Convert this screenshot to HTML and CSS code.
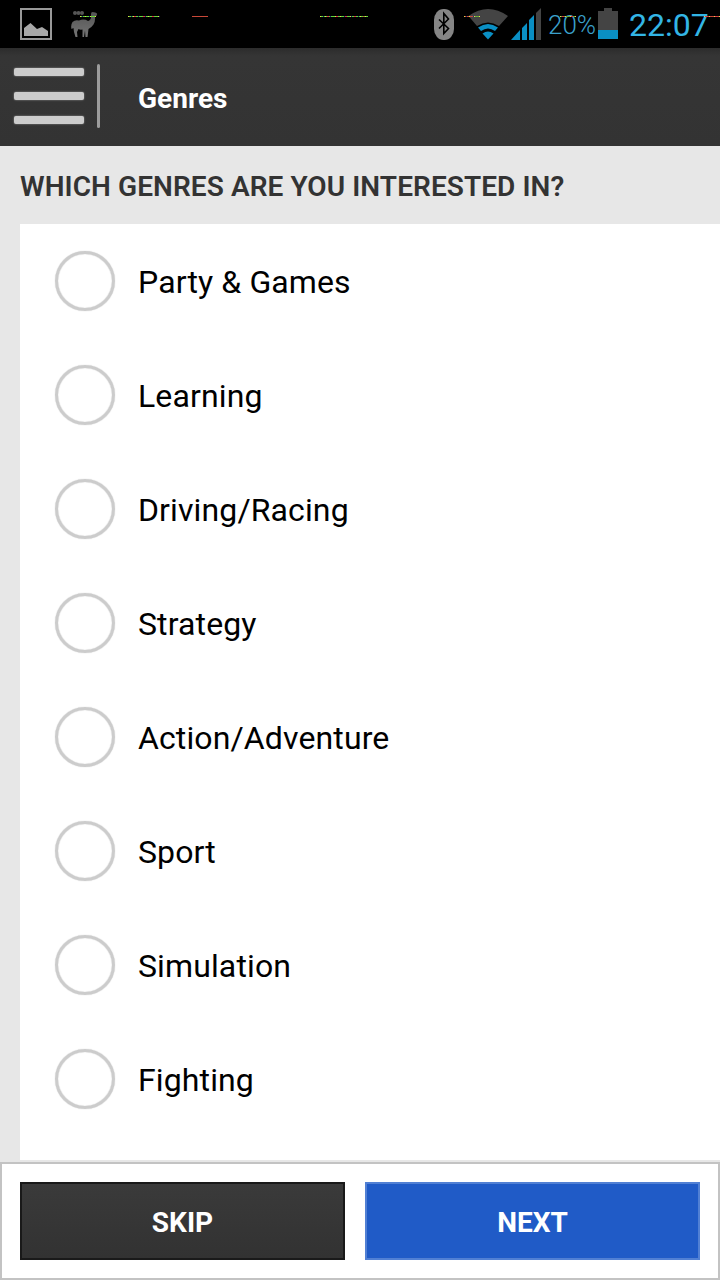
FILE: index.html
```html
<!DOCTYPE html>
<html lang="en">

<head>
    <meta charset="UTF-8">
    <meta name="viewport" content="width=device-width, initial-scale=1.0">
    <title>Genres</title>
    <link rel="stylesheet" href="styles.css">
</head>

<body>
    <div class="status-bar">
        <svg class="picture-icon" width="32" height="32" viewBox="0 0 32 32">
            <rect x="1" y="1" width="30" height="30" fill="none" stroke="#999" stroke-width="2" />
            <path d="M4 28V20L10.500 15L17 21L22 19L28 23V28Z" fill="#a8a8a8" />
        </svg>
        <svg class="llama-icon" width="28" height="28" viewBox="0 0 28 28">
            <defs>
                <linearGradient id="fur" x1="0" y1="0" x2="0" y2="1">
                    <stop offset="0" stop-color="#555" />
                    <stop offset="1" stop-color="#747474" />
                </linearGradient>
            </defs>
            <path d="M20 3Q20 1 21.500 1Q25 1 26 2.500Q26.500 5 24 6Q24.500 10 22.500 13.500Q20.500 16.500 17.500 18L16.500 26H14.500L14 19.500L13 26H11.500V18.500Q9 19 7.500 18L6 21L6.500 26H4.500L3 21L2.500 17L0.500 18Q-0.500 14 1.500 11Q4 8.500 8 9.500Q13 7.500 17 10Q20 9 20 6Z" fill="url(#fur)" />
            <g fill="#555">
                <circle cx="4" cy="2" r="2" />
                <circle cx="7.500" cy="2" r="2" />
                <circle cx="11" cy="2" r="2" />
            </g>
        </svg>
        <div class="status-right">
            <svg width="20" height="31" viewBox="0 0 20 31">
                <rect width="20" height="31" rx="9.500" ry="11" fill="#858585" />
                <path d="M5 10.500L14.500 19.500L9.800 24.500V4.500L14.500 10L5 19.500" fill="none" stroke="#000" stroke-width="1.600" />
            </svg>
            <svg class="wifi-icon" width="40" height="31" viewBox="0 0 40 31">
                <path d="M0.500 7Q20 -7 40 7L31 17Q20 10 9 17Z" fill="#444" />
                <path d="M10 18.500Q20 11.500 30 18.500L27 22Q20 17 13 22Z" fill="#0a8fc4" />
                <path d="M14.500 24.500Q20 20.500 25.500 24.500L20 30.500Z" fill="#0a8fc4" />
            </svg>
            <svg class="signal-icon" width="30" height="32" viewBox="0 0 30 32">
                <path d="M0 32L9 22V32ZM11 20L16 15V32H11ZM18 12L23 7V32H18Z" fill="#0a8fc4" />
                <path d="M25 5L30 0V32H25Z" fill="#444" />
            </svg>
            <span class="percent">20%</span>
            <svg class="battery-icon" width="20" height="31" viewBox="0 0 20 31">
                <path d="M0 3H6V0H14V3H20V22H0Z" fill="#444" />
                <rect y="22" width="20" height="9" fill="#0a8fc4" />
            </svg>
            <span class="clock">22:07</span>
        </div>
        <!-- coloured specks across the bar -->
        <svg class="specks" width="720" height="1" viewBox="0 0 720 1">
            <path d="M80 .5H96M128 .5H160M320 .5H368" stroke="#5fd83a" />
            <path d="M192 .5H208M464 .5H474M704 .5H720" stroke="#c84838" />
            <path d="M474 .5H480M560 .5H576" stroke="#64a83c" />
            <path d="M80 .5H96M128 .5H160M320 .5H367M464 .5H480M560 .5H576M704 .5H720" stroke="#e6d84a" stroke-dasharray="1 4" />
            <path d="M82 .5H94M131 .5H160M323 .5H364M466 .5H480" stroke="#203070" stroke-dasharray="1 6" />
            <path d="M134 .5H160M327 .5H364M562 .5H576M706 .5H720" stroke="#e0304c" stroke-dasharray="2 7" />
        </svg>
    </div>

    <header class="app-bar">
        <div class="menu">
            <span></span>
            <span></span>
            <span></span>
        </div>
        <div class="divider"></div>
        <h1>Genres</h1>
    </header>

    <main>
        <h2>WHICH GENRES ARE YOU INTERESTED IN?</h2>
        <ul class="genres">
            <li><span class="radio"></span><span class="name">Party &amp; Games</span></li>
            <li><span class="radio"></span><span class="name">Learning</span></li>
            <li><span class="radio"></span><span class="name">Driving/Racing</span></li>
            <li><span class="radio"></span><span class="name">Strategy</span></li>
            <li><span class="radio"></span><span class="name">Action/Adventure</span></li>
            <li><span class="radio"></span><span class="name">Sport</span></li>
            <li><span class="radio"></span><span class="name">Simulation</span></li>
            <li><span class="radio"></span><span class="name">Fighting</span></li>
        </ul>
    </main>

    <footer>
        <button class="skip">SKIP</button>
        <button class="next">NEXT</button>
    </footer>
</body>

</html>
```

FILE: styles.css
```css
* {
    box-sizing: border-box;
}

body {
    display: flex;
    flex-direction: column;
    width: 720px;
    height: 1280px;
    margin: 0;
    overflow: hidden;
    background: #e7e7e7;
    font-family: Roboto, sans-serif;
}

.status-bar {
    position: relative;
    display: flex;
    align-items: flex-start;
    height: 48px;
    padding: 8px 12px 0 20px;
    background: #000;
}

.llama-icon {
    margin: 3px 0 0 19px;
}

.status-right {
    display: flex;
    align-items: flex-start;
    margin-left: auto;
    padding-top: 1px;
}

.wifi-icon {
    margin-left: 14px;
}

.signal-icon {
    margin: -1px 0 0 3px;
}

.percent {
    width: 50px;
    margin: 0 0 0 7px;
    font-size: 26px;
    font-weight: 300;
    line-height: 32px;
    color: #3ba0cc;
}

.battery-icon {
    margin-top: -1px;
}

.clock {
    width: 79px;
    margin-left: 11px;
    font-size: 32px;
    line-height: 32px;
    white-space: nowrap;
    color: #33b5e5;
}

.specks {
    position: absolute;
    top: 16px;
    left: 0;
}

.app-bar {
    display: flex;
    align-items: center;
    height: 98px;
    padding-left: 14px;
    background: linear-gradient(#2c2c2c, #353535 8px, #333);
    color: #fff;
}

.menu {
    display: flex;
    flex-direction: column;
    gap: 16px;
    width: 70px;
    margin-bottom: 2px;
}

.menu span {
    height: 8px;
    border-radius: 2px;
    background: #ccc;
    box-shadow: 0 0 2px #999;
}

.divider {
    width: 3px;
    height: 64px;
    margin: 0 38px 2px 13px;
    border-radius: 2px;
    background: #9c9c9c;
}

h1 {
    margin: 2px 0 0;
    font-size: 28px;
    font-weight: 700;
}

main {
    display: flex;
    flex-direction: column;
    height: 1016px;
    padding: 0 0 2px 20px;
}

h2 {
    margin: 0;
    font-size: 28px;
    font-weight: 600;
    line-height: 82px;
    height: 78px;
    letter-spacing: 0.08px;
    color: #333;
    white-space: nowrap;
}

.genres {
    flex: 1;
    margin: 0;
    padding: 0;
    list-style: none;
    background: #fff;
}

.genres li {
    display: flex;
    align-items: center;
    height: 114px;
    padding-left: 35px;
}

.radio {
    width: 60px;
    height: 60px;
    margin-right: 23px;
    border: 3px solid #ccc;
    border-radius: 50%;
    box-shadow: 0 0 1px #bbb, inset 0 0 1px #bbb;
}

.name {
    padding-top: 2px;
    font-size: 32px;
    letter-spacing: 0.12px;
    color: #000;
}

footer {
    display: flex;
    gap: 20px;
    height: 118px;
    padding: 18px;
    border: 2px solid #c3c3c3;
    background: #fff;
}

button {
    height: 78px;
    padding: 2px 0 0;
    font-family: Roboto, sans-serif;
    font-size: 28px;
    font-weight: 700;
    color: #fff;
}

.skip {
    width: 325px;
    border: 2px solid #191919;
    background: linear-gradient(#3a3a3a, #323232);
}

.next {
    width: 335px;
    border: 2px solid #5180d4;
    background: #205bc7;
}
```
